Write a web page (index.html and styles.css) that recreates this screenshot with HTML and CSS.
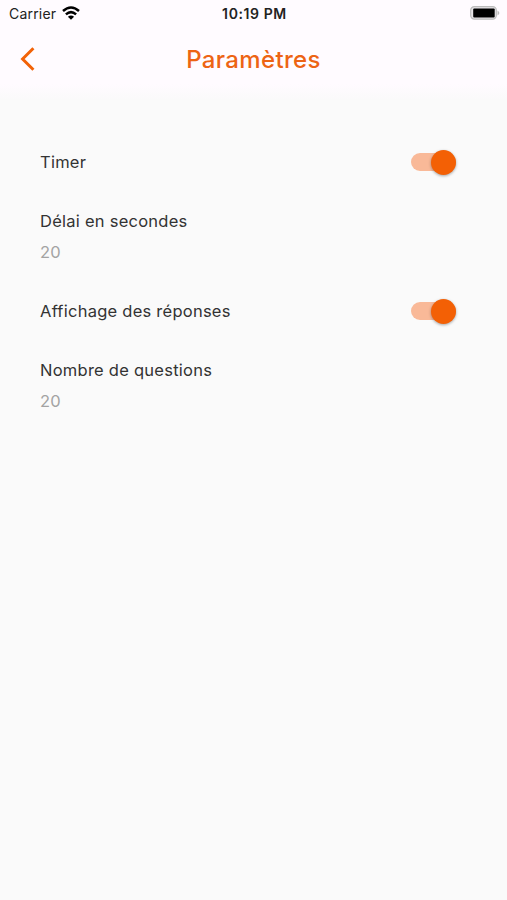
FILE: index.html
```
<!DOCTYPE html>
<html lang="fr">
    <head>
        <meta charset="utf-8">
        <title>Paramètres</title>
        <link rel="stylesheet" href="styles.css">
    </head>
    <body>
        <header class="header">
            <div class="status">
                <div class="carrier">
                    <span>Carrier</span>
                    <svg class="wifi" width="18" height="14" viewBox="0 0 18 14">
                        <path d="M1 5Q9-2 17 5M3.9 8.4Q9 3.9 14.1 8.4"/>
                        <path class="dot" d="M9 13.8L5.9 10.8Q9 8.3 12.1 10.8Z"/>
                    </svg>
                </div>
                <span class="time">10:19 PM</span>
                <svg class="battery" width="30" height="14" viewBox="0 0 30 14">
                    <rect x=".7" y=".7" width="25.6" height="12.4" rx="3.6"/>
                    <rect class="level" x="3.2" y="2.5" width="21.5" height="9" rx="1"/>
                    <path d="M27.5 4.4Q31.2 6.9 27.5 9.4Z"/>
                </svg>
            </div>
            <div class="nav">
                <svg class="back" width="16" height="24" viewBox="0 0 16 24">
                    <path d="M13.4 1.2L2.6 12L13.4 22.8"/>
                </svg>
                <h1 class="title">Paramètres</h1>
            </div>
        </header>
        <main class="settings">
            <div class="row">
                <span class="label">Timer</span>
                <div class="switch"></div>
            </div>
            <div class="field">
                <div class="label">Délai en secondes</div>
                <div class="value">20</div>
            </div>
            <div class="row">
                <span class="label">Affichage des réponses</span>
                <div class="switch"></div>
            </div>
            <div class="field">
                <div class="label">Nombre de questions</div>
                <div class="value">20</div>
            </div>
        </main>
    </body>
</html>
```

FILE: styles.css
```
body{
	margin:0;
	min-height:900px;
	background:#fafafa;
	font-family:Inter, "Liberation Sans", sans-serif;
	color:#333;
	}
.header{
	height:100px;
	background:linear-gradient(#fffbff 84%, #fafafa);
	}
.status{
	display:grid;
	grid-template-columns:1fr auto 1fr;
	align-items:center;
	height:27px;
	padding:0 7px 0 9px;
	font-size:14px;
	color:#222;
	}
.carrier{
	display:flex;
	align-items:center;
	gap:6px;
	letter-spacing:0.2px;
	}
.wifi{
	fill:none;
	stroke:#000;
	stroke-width:2.5;
	margin-top:-1px;
	}
.wifi .dot{
	fill:#000;
	stroke:none;
	}
.time{
	font-weight:600;
	letter-spacing:0.6px;
	}
.battery{
	justify-self:end;
	fill:#bbb;
	margin-top:-1px;
	}
.battery rect{
	fill:#e8e5e8;
	stroke:#bbb;
	stroke-width:1.2;
	}
.battery .level{
	fill:#000;
	stroke:none;
	}
.nav{
	display:grid;
	grid-template-columns:60px 1fr 60px;
	align-items:center;
	height:64px;
	}
.back{
	margin-left:20px;
	fill:none;
	stroke:#f26207;
	stroke-width:3;
	}
.title{
	margin:0;
	font-size:24px;
	font-weight:500;
	letter-spacing:0.35px;
	text-align:center;
	color:#ed6414;
	}
.settings{
	padding:47px 51px 0 40px;
	}
.row{
	display:flex;
	justify-content:space-between;
	align-items:center;
	height:30px;
	}
.label{
	font-size:16.5px;
	line-height:24px;
	letter-spacing:0.25px;
	}
.field{
	padding:32px 0 32px;
	}
.value{
	margin-top:7px;
	font-size:16.5px;
	line-height:24px;
	letter-spacing:0.25px;
	color:#a3a3a3;
	}
.switch{
	display:flex;
	justify-content:flex-end;
	align-items:center;
	width:45px;
	height:18px;
	border-radius:9px;
	background:#f9b998;
	}
.switch::after{
	content:"";
	width:25px;
	height:25px;
	flex:none;
	border-radius:50%;
	background:#f36005;
	box-shadow:0 1px 3px rgba(0,0,0,0.35);
	}
```
